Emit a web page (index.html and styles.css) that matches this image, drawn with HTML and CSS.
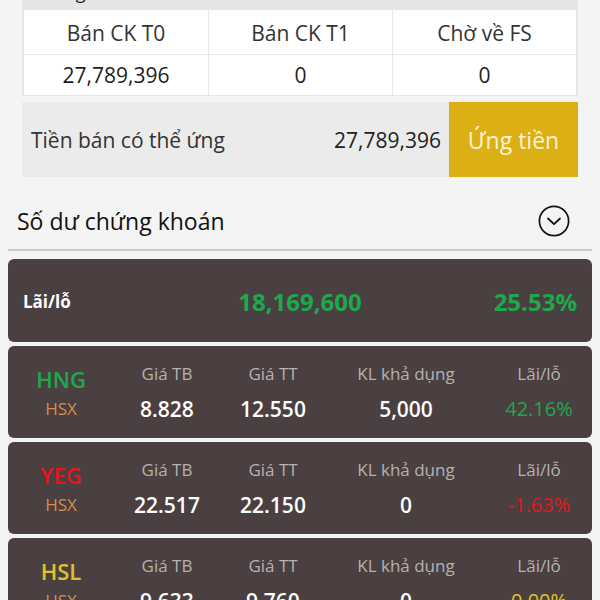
FILE: index.html
```html
<!DOCTYPE html>
<html lang="vi">
<head>
    <meta charset="UTF-8">
    <meta name="viewport" content="width=device-width, initial-scale=1.0">
    <title>Số dư chứng khoán</title>
    <link rel="stylesheet" href="styles.css">
</head>
<body>
    <div class="cash-box">
        <div class="cash-title">Thông tin tiền bán</div>
        <div class="cash-table">
            <div class="cell head">Bán CK T0</div>
            <div class="cell head">Bán CK T1</div>
            <div class="cell head">Chờ về FS</div>
            <div class="cell">27,789,396</div>
            <div class="cell">0</div>
            <div class="cell">0</div>
        </div>
    </div>

    <div class="advance">
        <span class="advance-label">Tiền bán có thể ứng</span>
        <span class="advance-amount">27,789,396</span>
        <button class="advance-btn">Ứng tiền</button>
    </div>

    <div class="section-head">
        <span class="section-title">Số dư chứng khoán</span>
        <svg class="toggle" width="32" height="32" viewBox="0 0 32 32">
            <circle cx="16" cy="16" r="14.6" fill="none" stroke="#111" stroke-width="1.7"/>
            <path d="M10 13.5 L16 19.2 L22 13.5" fill="none" stroke="#111" stroke-width="1.8" stroke-linecap="round" stroke-linejoin="round"/>
        </svg>
    </div>

    <div class="card total">
        <span class="total-label">Lãi/lỗ</span>
        <span class="total-value up">18,169,600</span>
        <span class="total-pct up">25.53%</span>
    </div>

    <div class="card stock">
        <div class="col">
            <div class="sym up">HNG</div>
            <div class="exch">HSX</div>
        </div>
        <div class="col"><div class="lbl">Giá TB</div><div class="val">8.828</div></div>
        <div class="col"><div class="lbl">Giá TT</div><div class="val">12.550</div></div>
        <div class="col"><div class="lbl">KL khả dụng</div><div class="val">5,000</div></div>
        <div class="col"><div class="lbl">Lãi/lỗ</div><div class="val up">42.16%</div></div>
    </div>

    <div class="card stock">
        <div class="col">
            <div class="sym down">YEG</div>
            <div class="exch">HSX</div>
        </div>
        <div class="col"><div class="lbl">Giá TB</div><div class="val">22.517</div></div>
        <div class="col"><div class="lbl">Giá TT</div><div class="val">22.150</div></div>
        <div class="col"><div class="lbl">KL khả dụng</div><div class="val">0</div></div>
        <div class="col"><div class="lbl">Lãi/lỗ</div><div class="val down">-1.63%</div></div>
    </div>

    <div class="card stock">
        <div class="col">
            <div class="sym ref">HSL</div>
            <div class="exch">HSX</div>
        </div>
        <div class="col"><div class="lbl">Giá TB</div><div class="val">9.633</div></div>
        <div class="col"><div class="lbl">Giá TT</div><div class="val">9.760</div></div>
        <div class="col"><div class="lbl">KL khả dụng</div><div class="val">0</div></div>
        <div class="col"><div class="lbl">Lãi/lỗ</div><div class="val ref">0.00%</div></div>
    </div>
</body>
</html>
```

FILE: styles.css
```css
body {
    margin: 0;
    padding: 0;
    background-color: #f4f4f4;
    font-family: "Open Sans", "Noto Sans", sans-serif;
    color: #222;
}
.cash-box {
    margin: -20px 22px 0;
    padding: 0 2px 1px;
    background-color: #e6e6e6;
}
.cash-title {
    height: 30px;
    line-height: 25px;
    padding-left: 9px;
    font-size: 18px;
    color: #222;
}
.cash-table {
    display: grid;
    grid-template-columns: 1fr 1fr 1fr;
    background-color: #fff;
}
.cell {
    height: 40px;
    line-height: 40px;
    text-align: center;
    font-size: 21px;
    color: #1e1e1e;
    border-left: 1px solid #e8e8e8;
}
.cell:nth-child(3n+1) {
    border-left: none;
}
.cell.head {
    height: 44px;
    line-height: 46px;
    color: #333;
    border-bottom: 1px solid #e8e8e8;
}
.advance {
    display: flex;
    align-items: center;
    height: 75px;
    margin: 6px 22px 0;
    background-color: #ebebeb;
}
.advance-label {
    flex: 1;
    padding-left: 9px;
    font-size: 21px;
    color: #333;
}
.advance-amount {
    margin-right: 8px;
    font-size: 21px;
    color: #222;
}
.advance-btn {
    width: 129px;
    height: 75px;
    border: none;
    background-color: #dcb015;
    color: #fbf3d6;
    font-family: inherit;
    font-size: 23px;
    padding: 0;
}
.section-head {
    display: flex;
    align-items: center;
    justify-content: space-between;
    height: 56px;
    margin: 0 8px;
    padding: 16px 22px 0 9px;
    border-bottom: 2px solid #cbcbcb;
}
.section-title {
    font-size: 23px;
    color: #111;
}
.card {
    margin: 4px 8px 0;
    background-color: #4a4041;
    border-radius: 6px;
    color: #fff;
}
.card.total {
    display: grid;
    grid-template-columns: 1fr auto 1fr;
    align-items: center;
    height: 81px;
    margin-top: 8px;
    padding: 2px 15px 0;
}
.total-label {
    font-size: 17px;
    font-weight: 700;
}
.total-value {
    font-size: 24px;
    font-weight: 700;
}
.total-pct {
    text-align: right;
    font-size: 24px;
    font-weight: 700;
}
.card.stock {
    display: grid;
    grid-template-columns: 106px 106px 106px 160px 106px;
    height: 79px;
    padding-top: 13px;
}
.col {
    text-align: center;
}
.lbl {
    line-height: 30px;
    font-size: 17px;
    color: #b8b0b0;
}
.val {
    margin-top: 5px;
    line-height: 30px;
    font-size: 21px;
    font-weight: 600;
    color: #fff;
}
.sym {
    margin-top: 5px;
    line-height: 30px;
    font-size: 22px;
    font-weight: 600;
}
.exch {
    line-height: 30px;
    font-size: 17px;
    color: #d98a4e;
}
.up {
    color: #1ea84c;
}
.down {
    color: #e5151c;
}
.ref {
    color: #e2c12a;
}
.val.up, .val.down, .val.ref {
    font-weight: 500;
    font-size: 20px;
}
```
